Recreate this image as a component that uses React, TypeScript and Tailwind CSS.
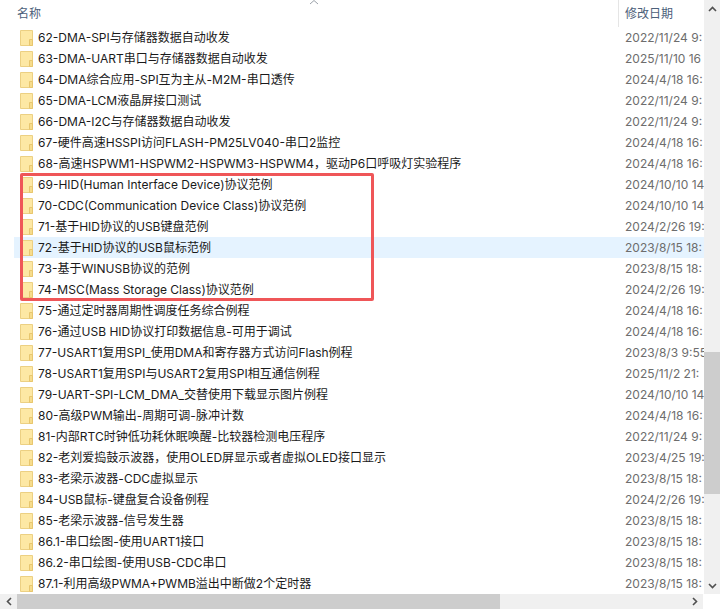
const rows: [string, string][] = [
  ["62-DMA-SPI与存储器数据自动收发", "2022/11/24 9:"],
  ["63-DMA-UART串口与存储器数据自动收发", "2025/11/10 16"],
  ["64-DMA综合应用-SPI互为主从-M2M-串口透传", "2024/4/18 16:"],
  ["65-DMA-LCM液晶屏接口测试", "2022/11/24 9:"],
  ["66-DMA-I2C与存储器数据自动收发", "2022/11/24 9:"],
  ["67-硬件高速HSSPI访问FLASH-PM25LV040-串口2监控", "2024/4/18 16:"],
  ["68-高速HSPWM1-HSPWM2-HSPWM3-HSPWM4，驱动P6口呼吸灯实验程序", "2024/4/18 16:"],
  ["69-HID(Human Interface Device)协议范例", "2024/10/10 14"],
  ["70-CDC(Communication Device Class)协议范例", "2024/10/10 14"],
  ["71-基于HID协议的USB键盘范例", "2024/2/26 19:"],
  ["72-基于HID协议的USB鼠标范例", "2023/8/15 18:"],
  ["73-基于WINUSB协议的范例", "2023/8/15 18:"],
  ["74-MSC(Mass Storage Class)协议范例", "2024/2/26 19:"],
  ["75-通过定时器周期性调度任务综合例程", "2024/4/18 16:"],
  ["76-通过USB HID协议打印数据信息-可用于调试", "2024/4/18 16:"],
  ["77-USART1复用SPI_使用DMA和寄存器方式访问Flash例程", "2023/8/3 9:55"],
  ["78-USART1复用SPI与USART2复用SPI相互通信例程", "2025/11/2 21:"],
  ["79-UART-SPI-LCM_DMA_交替使用下载显示图片例程", "2024/10/10 14"],
  ["80-高级PWM输出-周期可调-脉冲计数", "2024/4/18 16:"],
  ["81-内部RTC时钟低功耗休眠唤醒-比较器检测电压程序", "2022/11/24 9:"],
  ["82-老刘爱捣鼓示波器，使用OLED屏显示或者虚拟OLED接口显示", "2023/4/25 19:"],
  ["83-老梁示波器-CDC虚拟显示", "2023/8/15 18:"],
  ["84-USB鼠标-键盘复合设备例程", "2024/2/26 19:"],
  ["85-老梁示波器-信号发生器", "2023/8/15 18:"],
  ["86.1-串口绘图-使用UART1接口", "2023/8/15 18:"],
  ["86.2-串口绘图-使用USB-CDC串口", "2023/8/15 18:"],
  ["87.1-利用高级PWMA+PWMB溢出中断做2个定时器", "2023/8/15 18:"],
];

function Folder() {
  return (
    <svg width="13" height="16" viewBox="0 0 13 16" className="shrink-0">
      <path d="M.5.5h12v15H.5z" fill="#fde9a6" stroke="#ecd083" />
      <path d="M1 1h11v14H1z" fill="#fde8a4" />
      <path d="M12.500 9.500h-3v6h3z" fill="#f6dc8c" stroke="#e8c66e" />
    </svg>
  );
}

export default function App() {
  return (
    <div
      className="relative flex h-[610px] w-[720px] flex-col overflow-hidden bg-white text-[12px]"
      style={{ fontFamily: '"Inter", "Noto Sans CJK SC", sans-serif' }}
    >
      <div className="flex h-[594px] shrink-0">
        <div className="flex min-w-0 flex-1 flex-col overflow-hidden">
          <div className="relative flex h-[27px] shrink-0 text-[#4c607a]">
            <span className="w-[618px] pl-[17px] pt-[5px] leading-[17px]">名称</span>
            <span className="w-px bg-[#e5e5e5]" />
            <span className="pl-[6px] pt-[5px] leading-[17px]">修改日期</span>
            <svg className="absolute left-[309px] top-0" width="10" height="5" viewBox="0 0 10 5">
              <path d="M1 4l4-3.500L9 4" fill="none" stroke="#9aa0a8" />
            </svg>
          </div>
          {rows.map(([name, date], i) => (
            <div key={name} className="flex h-[21px] shrink-0 items-center pl-[14px]">
              <div className={`flex h-full flex-1 items-center ${i === 10 ? "bg-[#e5f3ff]" : ""}`}>
                <div className="flex w-[611px] shrink-0 items-center">
                  <span className="ml-[6px] mr-[5px] flex"><Folder /></span>
                  <span className="whitespace-nowrap pb-px leading-[19px] text-[#1a1a1a]">{name}</span>
                </div>
                <span className="w-[79px] overflow-hidden whitespace-nowrap pb-px leading-[19px] text-[#6d6d6d]">{date}</span>
              </div>
            </div>
          ))}
        </div>
        <div className="flex w-[16px] shrink-0 flex-col bg-[#f0f0f0]">
          <div className="flex h-[17px] items-center justify-center">
            <svg width="9" height="6" viewBox="0 0 9 6"><path d="M1 5l3.500-3.500L8 5" fill="none" stroke="#505050" strokeWidth="1.6" /></svg>
          </div>
          <div className="mt-[335px] h-[142px] bg-[#cdcdcd]" />
          <div className="flex-1" />
          <div className="flex h-[17px] items-center justify-center">
            <svg width="9" height="6" viewBox="0 0 9 6"><path d="M1 1l3.500 3.500L8 1" fill="none" stroke="#505050" strokeWidth="1.6" /></svg>
          </div>
        </div>
      </div>
      <div className="flex h-[15px] w-[703px] shrink-0 items-center bg-[#f0f0f0]">
        <div className="flex w-[17px] items-center justify-center">
          <svg width="6" height="9" viewBox="0 0 6 9"><path d="M5 1L1.500 4.500 5 8" fill="none" stroke="#505050" strokeWidth="1.6" /></svg>
        </div>
        <div className="h-full w-[483px] bg-[#cdcdcd]" />
        <div className="flex-1" />
        <div className="flex w-[16px] items-center justify-center">
          <svg width="6" height="9" viewBox="0 0 6 9"><path d="M1 1l3.500 3.500L1 8" fill="none" stroke="#505050" strokeWidth="1.6" /></svg>
        </div>
      </div>
      <div className="absolute left-[20px] top-[173px] h-[128px] w-[354px] rounded-[2px] border-[3px] border-[#ef5658]" />
    </div>
  );
}
